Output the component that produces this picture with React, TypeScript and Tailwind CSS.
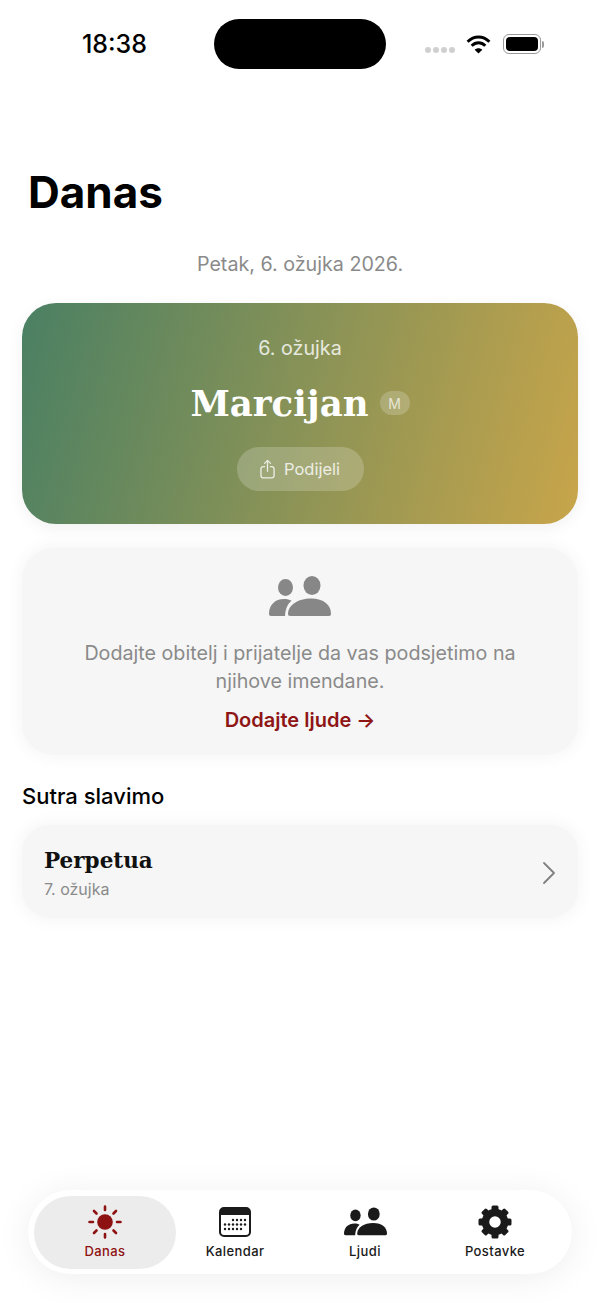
import React from 'react';

const sans = 'font-["Inter",sans-serif]';
const serif = 'font-["DejaVu_Serif",serif]';

const PeopleIcon = ({ className }: { className: string }) => (
  <svg viewBox="0 0 62 42" className={className} fill="currentColor">
    <ellipse cx="16.5" cy="11.5" rx="7.5" ry="8.5" />
    <ellipse cx="43" cy="9.5" rx="8.5" ry="9.5" />
    <path d="M0 38c0-9 6-15 15-15 3 0 5.500.6 7.500 1.800-3.500 3-6 7.500-6.500 15.200H2c-1.200 0-2-.8-2-2z" />
    <path d="M19 38c0-9 10-15.500 23-15.500S62 29 62 38c0 1.200-.8 2-2 2H21c-1.200 0-2-.8-2-2z" />
  </svg>
);

const SunIcon = () => (
  <svg viewBox="0 0 34 34" className="h-[34px] w-[34px] text-[#8f1212]" stroke="currentColor" strokeWidth="2.600" strokeLinecap="round">
    <circle cx="17" cy="17" r="7.800" fill="currentColor" stroke="none" />
    <path d="M17 1.500v3.500M17 29v3.500M1.500 17H5M29 17h3.500M6 6l2.500 2.500M25.500 25.500 28 28M6 28l2.500-2.500M25.500 8.500 28 6" />
  </svg>
);

const CalendarIcon = () => (
  <svg viewBox="0 0 32 30" className="h-[30px] w-[32px] text-[#1a1a1a]">
    <rect x="1" y="1" width="30" height="28" rx="4" fill="#fff" stroke="currentColor" strokeWidth="2" />
    <path d="M1 5a4 4 0 0 1 4-4h22a4 4 0 0 1 4 4v3H1z" fill="currentColor" />
    {[[14, 13], [18, 13], [22, 13], [26, 13], [6, 17.500], [10, 17.500], [14, 17.500], [18, 17.500], [22, 17.500], [26, 17.500], [6, 22], [10, 22], [14, 22], [18, 22], [22, 22]].map(([x, y]) => (
      <circle key={`${x}-${y}`} cx={x} cy={y} r="1.200" fill="currentColor" />
    ))}
  </svg>
);

const GearIcon = () => (
  <svg viewBox="0 0 34 34" className="h-[34px] w-[34px] text-[#1a1a1a]">
    <g fill="currentColor">
      {[0, 45, 90, 135, 180, 225, 270, 315].map((a) => (
        <rect key={a} x="13.500" y="0.500" width="7" height="8" rx="1.500" transform={`rotate(${a} 17 17)`} />
      ))}
    </g>
    <circle cx="17" cy="17" r="9.500" fill="none" stroke="currentColor" strokeWidth="7.500" />
  </svg>
);

const ShareIcon = () => (
  <svg viewBox="0 0 16 21" className="h-[20px] w-[15px]" fill="none" stroke="currentColor" strokeWidth="1.400" strokeLinecap="round" strokeLinejoin="round">
    <path d="M5 8H3.500A2.500 2.500 0 0 0 1 10.500v7A2.500 2.500 0 0 0 3.500 20h9a2.500 2.500 0 0 0 2.500-2.500v-7A2.500 2.500 0 0 0 12.500 8H11" />
    <path d="M8 13V1.500M4.800 4.500 8 1.300l3.200 3.200" />
  </svg>
);

const Tab = ({ icon, label, active }: { icon: React.ReactNode; label: string; active?: boolean }) => (
  <div className={`flex h-[73px] flex-col items-center justify-end pb-[9px] ${active ? '-mx-[6px] w-[142px] rounded-[37px] bg-[#ececec] text-[#8f1212]' : 'w-[130px] text-[#1a1a1a]'}`}>
    <div className="flex h-[36px] items-center justify-center">{icon}</div>
    <span className="mt-[2px] text-[13px] leading-[18px] font-medium tracking-[0.4px]">{label}</span>
  </div>
);

export default function App() {
  return (
    <div className={`flex h-[1303px] w-[600px] flex-col overflow-hidden bg-white ${sans}`}>
      {/* status bar */}
      <div className="flex h-[69px] shrink-0 items-start pt-[19px]">
        <div className="flex h-[52px] w-[214px] items-center justify-end pr-[67px] text-[25px] font-medium text-black">18:38</div>
        <div className="h-[50px] w-[172px] rounded-[25px] bg-black" />
        <div className="flex h-[50px] items-center pl-[39px]">
          <div className="mt-[12px] flex gap-[2px]">
            {[0, 1, 2, 3].map((i) => (
              <span key={i} className="h-[6px] w-[6px] rounded-full bg-[#d0d0d0]" />
            ))}
          </div>
          <svg viewBox="0 0 28 22" className="ml-[10px] h-[20px] w-[27px] text-black" fill="none" stroke="currentColor" strokeWidth="3.200">
            <path d="M2 8.500c7-7 17-7 24 0M6.500 13c4.500-4.500 10.500-4.500 15 0" />
            <path d="M14 21.500l-4.200-4.300c2.400-2.200 6-2.200 8.400 0z" fill="currentColor" stroke="none" />
          </svg>
          <div className="ml-[11px] flex items-center">
            <div className="flex h-[20px] w-[38px] items-center justify-center rounded-[6px] border border-[#9a9a9a] p-[2px]">
              <div className="h-full w-full rounded-[4px] bg-black" />
            </div>
            <div className="ml-[1px] h-[7px] w-[2px] rounded-r-full bg-[#9a9a9a]" />
          </div>
        </div>
      </div>

      <h1 className="mt-[94px] pl-[28px] text-[44px] leading-[58px] font-bold text-black">Danas</h1>

      <p className="mt-[30px] text-center text-[19.700px] leading-[26px] text-[#8a8a8a]">Petak, 6. ožujka 2026.</p>

      {/* name day card */}
      <div className="mx-[22px] mt-[26px] flex h-[221px] flex-col items-center rounded-[34px] bg-[linear-gradient(105deg,#4a8063,#c8a54a)] pt-[32px] shadow-[0_4px_16px_rgba(0,0,0,0.06)]">
        <p className="text-[19.700px] leading-[26px] text-white/80">6. ožujka</p>
        <div className="mt-[15px] flex items-center gap-[11px]">
          <span className={`pt-[4px] text-[35.600px] leading-[48px] font-bold text-white ${serif}`}>Marcijan</span>
          <span className="mt-[2px] flex h-[24px] w-[30px] items-center justify-center rounded-[12px] bg-white/20 text-[14px] text-white/70">M</span>
        </div>
        <div className="mt-[19px] flex h-[44px] w-[127px] items-center justify-center gap-[9px] rounded-[22px] bg-white/20 text-[16.500px] text-white/80">
          <ShareIcon />
          <span>Podijeli</span>
        </div>
      </div>

      {/* empty state */}
      <div className="mx-[22px] mt-[24px] flex h-[207px] flex-col items-center rounded-[32px] bg-[#f5f6f5] pt-[28px] shadow-[0_0_16px_3px_#f5f6f5]">
        <PeopleIcon className="h-[42px] w-[62px] text-[#868786]" />
        <p className="mt-[21px] w-[470px] text-center text-[19.700px] leading-[28px] text-[#8a8a8a]">
          Dodajte obitelj i prijatelje da vas podsjetimo na njihove imendane.
        </p>
        <p className="mt-[12px] text-[20px] leading-[26px] font-semibold text-[#8f1515]">Dodajte ljude →</p>
      </div>

      <h2 className="mt-[27px] pl-[22px] text-[22px] leading-[28px] font-medium text-black">Sutra slavimo</h2>

      {/* tomorrow row */}
      <div className="mx-[22px] mt-[15px] flex h-[93px] items-center justify-between rounded-[28px] bg-[#f5f6f5] pr-[22px] pl-[22px] shadow-[0_0_16px_3px_#f5f6f5]">
        <div className="pt-[3px]">
          <p className={`text-[21.500px] leading-[30px] font-bold text-[#111] ${serif}`}>Perpetua</p>
          <p className="mt-[2px] text-[16px] leading-[22px] text-[#8a8a8a]">7. ožujka</p>
        </div>
        <svg viewBox="0 0 14 24" className="mt-[2px] h-[24px] w-[14px] text-[#808080]" fill="none" stroke="currentColor" strokeWidth="1.800" strokeLinecap="round" strokeLinejoin="round">
          <path d="M2 2l10 10L2 22" />
        </svg>
      </div>

      {/* tab bar */}
      <div className="mx-[28px] mt-auto mb-[29px] flex h-[84px] items-center rounded-[42px] bg-white pl-[12px] shadow-[0_4px_36px_rgba(0,0,0,0.07)]">
        <Tab icon={<SunIcon />} label="Danas" active />
        <Tab icon={<CalendarIcon />} label="Kalendar" />
        <Tab icon={<PeopleIcon className="h-[30px] w-[43px]" />} label="Ljudi" />
        <Tab icon={<GearIcon />} label="Postavke" />
      </div>
    </div>
  );
}
